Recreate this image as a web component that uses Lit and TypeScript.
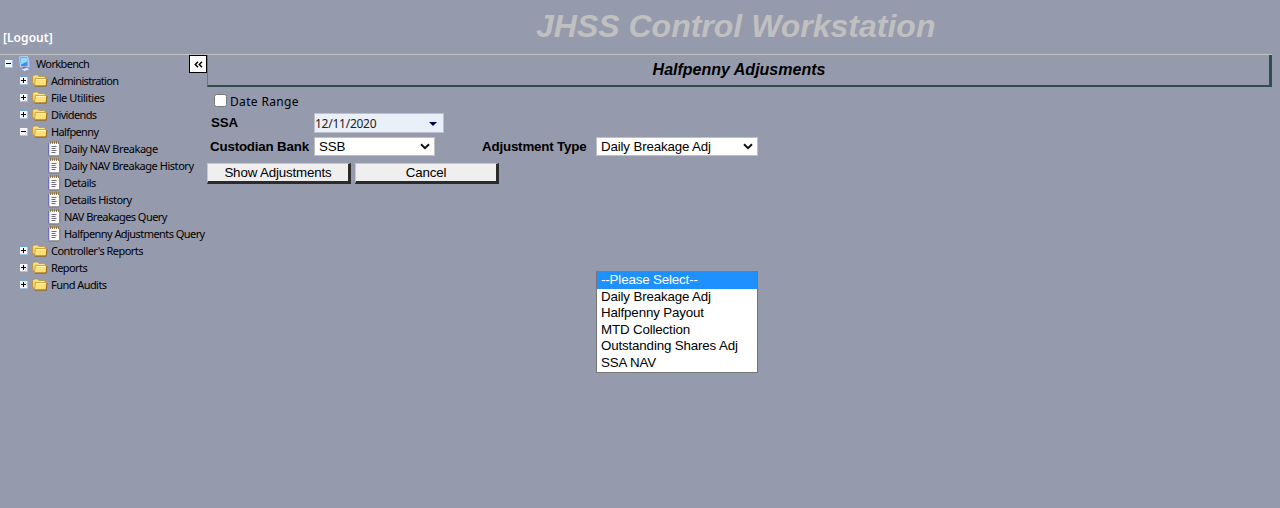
import { LitElement, html, css, svg, nothing } from "lit";
import { customElement, property } from "lit/decorators.js";

interface TreeItem {
  label: string;
  level: number;
  kind: "root" | "folder" | "page";
  tracking: number;
  open?: boolean;
}

const items: TreeItem[] = [
  { label: "Workbench", level: 0, kind: "root", tracking: -0.64, open: true },
  { label: "Administration", level: 1, kind: "folder", tracking: -0.66 },
  { label: "File Utilities", level: 1, kind: "folder", tracking: -0.42 },
  { label: "Dividends", level: 1, kind: "folder", tracking: -0.62 },
  { label: "Halfpenny", level: 1, kind: "folder", tracking: -0.64, open: true },
  { label: "Daily NAV Breakage", level: 2, kind: "page", tracking: -0.44 },
  { label: "Daily NAV Breakage History", level: 2, kind: "page", tracking: -0.46 },
  { label: "Details", level: 2, kind: "page", tracking: -0.5 },
  { label: "Details History", level: 2, kind: "page", tracking: -0.5 },
  { label: "NAV Breakages Query", level: 2, kind: "page", tracking: -0.54 },
  { label: "Halfpenny Adjustments Query", level: 2, kind: "page", tracking: -0.56 },
  { label: "Controller's Reports", level: 1, kind: "folder", tracking: -0.54 },
  { label: "Reports", level: 1, kind: "folder", tracking: -0.6 },
  { label: "Fund Audits", level: 1, kind: "folder", tracking: -0.55 },
];

const folderIcon = html`<svg width="16" height="16" viewBox="0 0 16 16">
  <path d="M.6 3.8 2 2.2h3.6L7 3.6h5.4l1.2 1.2V12H2.6L.6 9.8z" fill="#f6d670" stroke="#b98f38" stroke-width=".9"/>
  <path d="M1.4 4.2 2.4 3h3L6.8 4.4h5" fill="none" stroke="#fff3b0" stroke-width=".8"/>
  <path d="M3.4 5.6h11.2l-.5 7.2H2.6z" fill="#fee278" stroke="#c39436" stroke-width=".8"/>
  <path d="M4 6.5h9.8" stroke="#fffac8" stroke-width=".9"/>
  <path d="M2.6 13.2h11.7L15 6" fill="none" stroke="#8f6722" stroke-width=".9"/>
</svg>`;

const pageIcon = html`<svg width="13" height="16" viewBox="0 0 13 16">
  <path d="M1 1.8h10.3v12.7H.8z" fill="#fbfbfb"/>
  <path d="M.7 2v12.5" stroke="#6666ae" stroke-width="1"/>
  <path d="M1.7 2v12" stroke="#c9c9ea" stroke-width=".8"/>
  <path d="M.8 15h9.7l1.3-1.6V2.2" fill="none" stroke="#77736d" stroke-width=".9"/>
  <path d="M1.5 1h10" stroke="#c8a868" stroke-width=".8"/>
  <path d="M2.5.3v2.7M4.5.3v2.7M6.5.3v2.7M8.5.3v2.7M10.5.3v2.7" stroke="#7d5c28" stroke-width=".8"/>
  <path d="M3.5 5.5h5M3.5 7.5h4M3.5 9.5h5M3.5 11.5h4" stroke="#6e6e78"/>
</svg>`;

const computerIcon = html`<svg width="14" height="16" viewBox="0 0 14 16">
  <path d="M9 1.6l2.6.7.8 8.6L9.8 13z" fill="#aebbe4" stroke="#7c8cc0" stroke-width=".7"/>
  <path d="M1.6.9 9.6.6l.7 9.6-7.7.8z" fill="#3b8fe8" stroke="#cfe0fb" stroke-width=".9"/>
  <path d="M2.6 1.9 8.8 1.6l.3 4-5.9 3z" fill="#8fdcff"/>
  <path d="M4.5 11l3.5-.4 1 1.6-4 .8z" fill="#4a66b8"/>
  <path d="M2.2 13.2l6.6-1.8 3.8 1.8-5.8 2.2z" fill="#e3e6f6" stroke="#7f88b2" stroke-width=".7"/>
</svg>`;

@customElement("nav-tree")
class NavTree extends LitElement {
  static styles = css`
    :host { display: block; width: 189px; flex: none; }
    .row {
      display: flex; align-items: center; height: 17px; white-space: nowrap;
      font: 11px "Noto Sans", "Open Sans", sans-serif; color: #000;
    }
    .l0 { padding-left: 4px; }
    .l1 { padding-left: 19px; }
    .l2 { padding-left: 48px; }
    .toggle { width: 9px; height: 9px; margin-right: 4px; flex: none; }
    .l0 .toggle { margin-right: 5px; }
    .icon { display: flex; flex: none; width: 16px; margin-right: 3px; }
    .l0 .icon { width: 14px; margin-right: 4px; }
    .l2 .icon { width: 13px; }
    svg { display: block; }
  `;

  private toggle(open?: boolean) {
    return html`<svg class="toggle" viewBox="0 0 9 9">
      <path d="M.5 8.5v-8h8" fill="none" stroke="#70a5d2"/>
      <path d="M1 1h7v7H1z" fill="#f4f6fb"/>
      <path d="M1 8.5h7.5V1" fill="none" stroke="#a3c3e0"/>
      <path d="M2 4.5h5" stroke="#000"/>
      ${open ? nothing : svg`<path d="M4.5 2v5" stroke="#000"/>`}
    </svg>`;
  }

  render() {
    return items.map((i) => html`<div class="row l${i.level}">
      ${i.kind === "page" ? nothing : this.toggle(i.open)}
      <span class="icon">${i.kind === "root" ? computerIcon : i.kind === "folder" ? folderIcon : pageIcon}</span>
      <span style="letter-spacing:${i.tracking}px">${i.label}</span>
    </div>`);
  }
}

@customElement("select-box")
class SelectBox extends LitElement {
  @property() value = "";
  static styles = css`
    :host {
      display: flex; box-sizing: border-box; height: 19px; align-items: center;
      justify-content: space-between; background: #fff; border: 1px solid #c0c0c0;
      padding: 0 4px; font: 13.33px "Liberation Sans", Arial, sans-serif; letter-spacing: -0.15px;
    }
    svg { display: block; }
  `;
  render() {
    return html`<span>${this.value}</span>
      <svg width="10" height="7" viewBox="0 0 10 7"><path d="M1 1.2l4 4 4-4" fill="none" stroke="#111" stroke-width="2"/></svg>`;
  }
}

@customElement("app-root")
class AppRoot extends LitElement {
  static styles = css`
    :host {
      display: block; position: relative; width: 1280px; height: 508px; overflow: hidden;
      background: #969aad; color: #000; font: 13.33px "Liberation Sans", Arial, sans-serif;
    }
    .top { display: flex; height: 54px; }
    .logout {
      width: 200px; padding: 29px 0 0 3px; box-sizing: border-box; color: #fff;
      font: 600 12px/17px "Noto Sans", sans-serif; letter-spacing: 0.05px;
    }
    .brand {
      flex: 1; padding: 8px 0 0 336px; color: #c0c0c0; white-space: nowrap;
      font: italic bold 32px/37px "Liberation Sans", Arial, sans-serif;
    }
    .body { display: flex; width: 1272px; box-sizing: border-box; border-top: 1px solid #c0c0c0; }
    .collapse {
      box-sizing: border-box; width: 18px; height: 18px; flex: none; background: #fff;
      border: 1px solid #000; display: flex; align-items: center; justify-content: center;
    }
    .main { flex: 1; }
    .title {
      box-sizing: border-box; height: 32px; text-align: center; padding-left: 1px;
      border-left: 1px solid #4a80a5; border-right: 3px solid #2f4f4f; border-bottom: 2px solid #2f4f4f;
      font: italic bold 16px/29px "Liberation Sans", Arial, sans-serif;
    }
    .range {
      display: flex; align-items: center; height: 26px; padding-left: 7px;
      font: 12px "Noto Sans", sans-serif; letter-spacing: 0.35px;
    }
    .range span { padding-top: 2px; }
    .check {
      box-sizing: border-box; width: 13px; height: 13px; margin: 0 3px 0 0; background: #fff;
      border: 1px solid #767676; border-radius: 2.5px;
    }
    .line { display: flex; height: 24px; align-items: flex-start; }
    .label { font-weight: bold; line-height: 19px; white-space: nowrap; letter-spacing: -0.18px; }
    .ssa { width: 103px; padding-left: 4px; }
    .bank-label { width: 104px; padding-left: 3px; }
    .date {
      display: flex; justify-content: space-between; align-items: center; box-sizing: border-box;
      width: 130px; height: 20px; border: 1px solid #c0c0c8; background: #e9f0fa; padding: 1px 6px 0 0;
      font: 12px "Noto Sans", sans-serif; letter-spacing: -0.25px; color: #222;
    }
    .bank { width: 121px; }
    .type-label { width: 114px; margin-left: 47px; }
    .type { width: 162px; }
    .buttons { display: flex; gap: 4px; padding-top: 2px; }
    .btn {
      box-sizing: border-box; width: 144px; height: 21px; background: #efefef; text-align: center;
      border: 1px solid #c8c8c8; border-right: 3px solid #2b2b2b; border-bottom: 3px solid #2b2b2b;
      line-height: 18px; letter-spacing: -0.15px;
    }
    .menu {
      position: absolute; left: 596px; top: 271px; box-sizing: border-box; width: 162px; height: 102px;
      background: #fff; border: 1px solid #767676; border-top: 0; line-height: 16px; letter-spacing: -0.15px;
    }
    .option { height: 16.4px; padding-left: 4px; }
    .active { height: 18px; line-height: 18px; color: #fff; background: #1e90ff; }
  `;

  render() {
    return html`
      <div class="top">
        <div class="logout">[Logout]</div>
        <div class="brand">JHSS Control Workstation</div>
      </div>
      <div class="body">
        <nav-tree></nav-tree>
        <div class="collapse">
          <svg width="9" height="7" viewBox="0 0 9 7"><path d="M4 .8L1.3 3.5 4 6.2M8 .8L5.3 3.5 8 6.2" fill="none" stroke="#000" stroke-width="1.5"/></svg>
        </div>
        <div class="main">
          <div class="title">Halfpenny Adjusments</div>
          <div class="range"><i class="check"></i><span>Date Range</span></div>
          <div class="line">
            <div class="label ssa">SSA</div>
            <div class="date"><span>12/11/2020</span>
              <svg width="8" height="4" viewBox="0 0 8 4"><path d="M0 0h8L4 4z" fill="#000050"/></svg>
            </div>
          </div>
          <div class="line">
            <div class="label bank-label">Custodian Bank</div>
            <select-box class="bank" value="SSB"></select-box>
            <div class="label type-label">Adjustment Type</div>
            <select-box class="type" value="Daily Breakage Adj"></select-box>
          </div>
          <div class="buttons">
            <div class="btn">Show Adjustments</div>
            <div class="btn">Cancel</div>
          </div>
        </div>
      </div>
      <div class="menu">
        <div class="option active">--Please Select--</div>
        ${["Daily Breakage Adj", "Halfpenny Payout", "MTD Collection", "Outstanding Shares Adj", "SSA NAV"].map(
          (o) => html`<div class="option">${o}</div>`)}
      </div>`;
  }
}
